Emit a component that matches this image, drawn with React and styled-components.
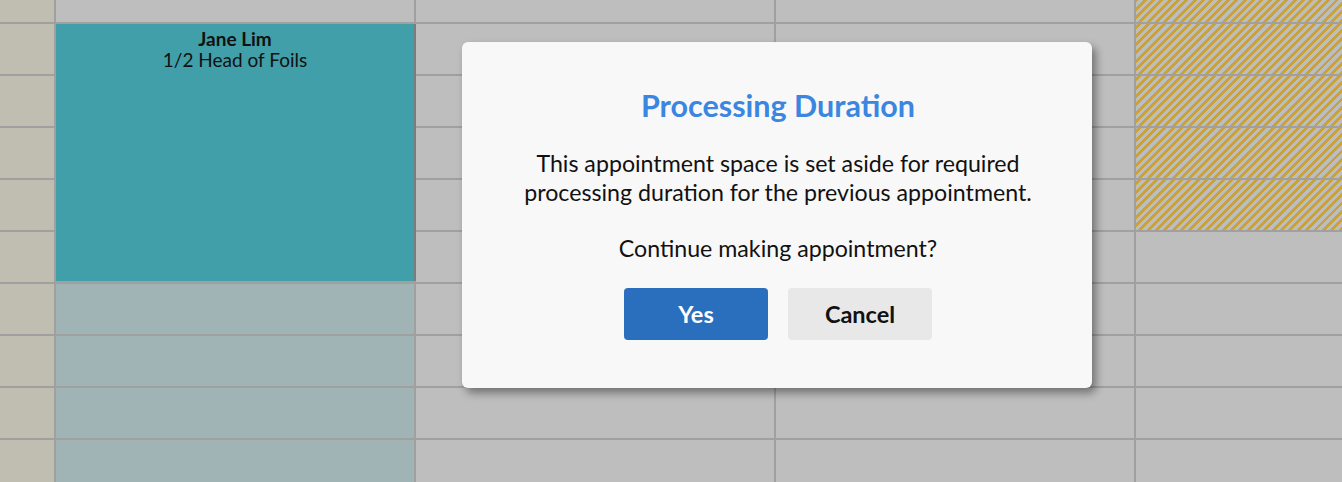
import React from "react";
import styled, { createGlobalStyle, css } from "styled-components";

const GlobalStyle = createGlobalStyle`
  html, body { margin: 0; padding: 0; }
  body {
    width: 1342px;
    height: 482px;
    overflow: hidden;
    font-family: Lato, "Open Sans", sans-serif;
    background: #bebebe;
  }
`;

const Page = styled.div`
  position: relative;
  width: 1342px;
  height: 482px;
  overflow: hidden;
`;

const Grid = styled.div`
  display: grid;
  grid-template-columns: 54px 358px 358px 358px 206px;
  grid-template-rows: 22px repeat(8, 50px) 42px;
  gap: 2px;
  background: #a0a0a0;
  width: 1342px;
  height: 482px;
`;

const tones = {
  time: css`background: #c0bdb1;`,
  empty: css`background: #bebebe;`,
  processing: css`background: #a0b4b6;`,
  blocked: css`
    background: repeating-linear-gradient(
      -45deg,
      #c9a23a 0px,
      #c9a23a 2.8px,
      #bdbdbd 2.8px,
      #bdbdbd 5.9px
    );
  `,
};

const Cell = styled.div`
  grid-column: ${(p) => p.$col};
  grid-row: ${(p) => p.$row};
  ${(p) => tones[p.$tone]}
`;

const Appointment = styled.div`
  grid-column: 2;
  grid-row: 2 / 7;
  margin-bottom: 1px;
  background: #409fa8;
  box-shadow: 2px 0 0 #7c7c7c;
  display: flex;
  flex-direction: column;
  align-items: center;
  padding-top: 4px;
  color: #111;
  font-size: 19px;
  line-height: 21px;
  z-index: 1;
`;

const ClientName = styled.div`
  font-weight: 700;
`;

const Service = styled.div`
  font-weight: 400;
`;

const Dialog = styled.div`
  position: absolute;
  left: 462px;
  top: 42px;
  width: 630px;
  height: 346px;
  box-sizing: border-box;
  background: #f8f8f8;
  border-radius: 6px;
  box-shadow: 4px 5px 9px rgba(0, 0, 0, 0.4);
  display: flex;
  flex-direction: column;
  align-items: center;
  padding: 45px 0 0 2px;
  z-index: 5;
`;

const Title = styled.h2`
  margin: 0;
  font-size: 30.5px;
  line-height: 36px;
  font-weight: 700;
  color: #3b86e0;
`;

const Message = styled.p`
  margin: ${(p) => p.$mt}px 0 0;
  font-size: 23.2px;
  line-height: 29px;
  color: #111;
  text-align: center;
`;

const Actions = styled.div`
  display: flex;
  gap: 20px;
  margin-top: 25px;
`;

const Button = styled.button`
  width: 144px;
  height: 52px;
  border: none;
  border-radius: 4px;
  font-family: Lato, "Open Sans", sans-serif;
  font-size: 23.5px;
  font-weight: 700;
  cursor: pointer;
  ${(p) =>
    p.$primary
      ? css`
          background: #2a6ebe;
          color: #fff;
        `
      : css`
          background: #e8e8e8;
          color: #111;
        `}
`;

const ROWS = 10;

export default function App() {
  const cells = [];
  for (let r = 1; r <= ROWS; r++) {
    cells.push(<Cell key={`t${r}`} $col={1} $row={r} $tone="time" />);
    if (r === 1 || r >= 7) {
      cells.push(
        <Cell key={`a${r}`} $col={2} $row={r} $tone={r >= 7 ? "processing" : "empty"} />
      );
    }
    cells.push(<Cell key={`b${r}`} $col={3} $row={r} $tone="empty" />);
    cells.push(<Cell key={`c${r}`} $col={4} $row={r} $tone="empty" />);
    cells.push(
      <Cell key={`d${r}`} $col={5} $row={r} $tone={r <= 5 ? "blocked" : "empty"} />
    );
  }

  return (
    <>
      <GlobalStyle />
      <Page>
        <Grid>
          {cells}
          <Appointment>
            <ClientName>Jane Lim</ClientName>
            <Service>1/2 Head of Foils</Service>
          </Appointment>
        </Grid>
        <Dialog role="dialog">
          <Title>Processing Duration</Title>
          <Message $mt={26}>
            This appointment space is set aside for required
            <br />
            processing duration for the previous appointment.
          </Message>
          <Message $mt={27}>Continue making appointment?</Message>
          <Actions>
            <Button $primary>Yes</Button>
            <Button>Cancel</Button>
          </Actions>
        </Dialog>
      </Page>
    </>
  );
}
